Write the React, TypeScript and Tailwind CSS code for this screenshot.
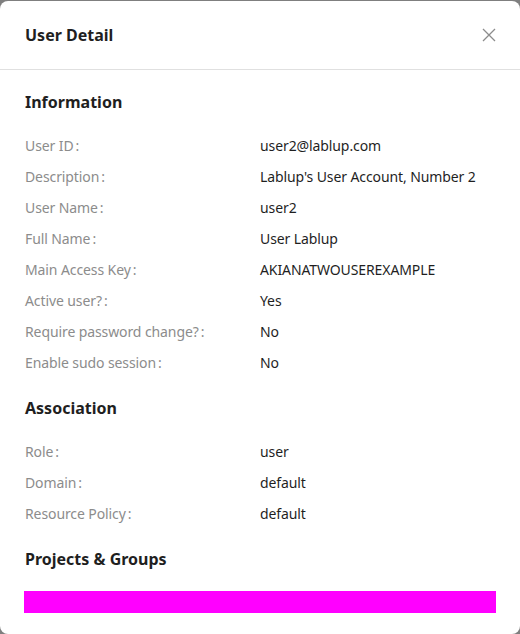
const INFO = [
  ['User ID', 'user2@lablup.com'],
  ['Description', "Lablup's User Account, Number 2"],
  ['User Name', 'user2'],
  ['Full Name', 'User Lablup'],
  ['Main Access Key', 'AKIANATWOUSEREXAMPLE'],
  ['Active user?', 'Yes'],
  ['Require password change?', 'No'],
  ['Enable sudo session', 'No'],
]

const ASSOC = [
  ['Role', 'user'],
  ['Domain', 'default'],
  ['Resource Policy', 'default'],
]

function Rows({ items }: { items: string[][] }) {
  return (
    <div>
      {items.map(([label, value]) => (
        <div key={label} className="grid grid-cols-2 h-[31px] items-center text-sm tracking-[-0.1px]">
          <div className="text-[#8c8c8c] pl-px">
            {label}
            <span className="ml-0.5 mr-2">:</span>
          </div>
          <div className="text-[#1f1f1f]">{value}</div>
        </div>
      ))}
    </div>
  )
}

export default function App() {
  return (
    <div className="min-h-screen bg-[#7f7f7f] pt-px" style={{ fontFamily: '"Noto Sans", "Open Sans", sans-serif' }}>
      <div className="bg-white rounded-lg h-[633px] overflow-hidden">
        <div className="h-[69px] px-6 flex items-center justify-between border-b border-[#e0e0e0]">
          <h1 className="text-base font-bold text-[#1f1f1f] pl-px">User Detail</h1>
          <button className="text-[#8c8c8c] p-1 -mr-1">
            <svg width="14" height="14" viewBox="0 0 14 14" fill="none" stroke="currentColor" strokeWidth="1.3">
              <path d="M1 1l12 12M13 1L1 13" />
            </svg>
          </button>
        </div>
        <div className="px-6 pt-5">
          <h2 className="text-base font-bold text-[#1f1f1f] leading-6 mb-4 pl-px">Information</h2>
          <Rows items={INFO} />
          <h2 className="text-base font-bold text-[#1f1f1f] leading-6 mt-[18px] mb-4 pl-px">Association</h2>
          <Rows items={ASSOC} />
          <h2 className="text-base font-bold text-[#1f1f1f] leading-6 mt-[18px] mb-5 pl-px">Projects &amp; Groups</h2>
          <div className="h-[22px] bg-[#ff00ff]" />
        </div>
      </div>
    </div>
  )
}
